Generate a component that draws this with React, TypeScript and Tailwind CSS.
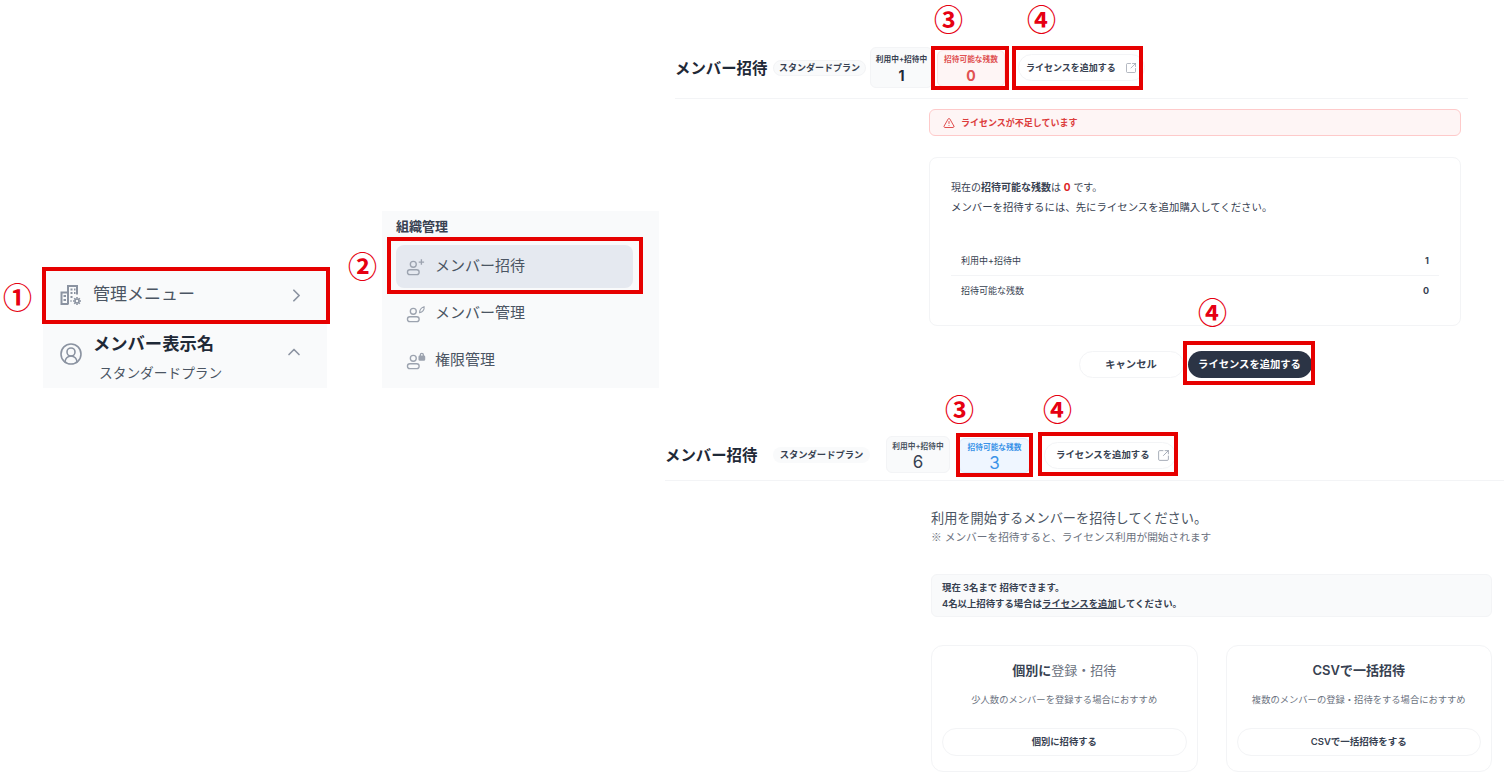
import { ChevronRight, ChevronUp, CircleUserRound, SquareArrowOutUpRight, TriangleAlert } from 'lucide-react'
import clsx from 'clsx'

function BuildingGear() {
  return (
    <svg width="22" height="22" viewBox="0 0 22 22" fill="none" stroke="#8b93a1" strokeWidth="2">
      <path d="M8 20.5V2h9v8.5" />
      <path d="M8 20H1.5V8.5H8" />
      <path d="M10.5 5.5h2M14 5.5h1.5M10.5 9h2M14 9h1.5M3.5 12h2.5M3.5 16h2.5M10.5 13h2M10.5 17h1" strokeWidth="2" />
      <circle cx="17" cy="17" r="2" strokeWidth="1.6" />
      <path d="M17 13v1.6M17 19.4V21M13 17h1.6M19.4 17H21M14.2 14.2l1.1 1.1M18.7 18.7l1.1 1.1M14.2 19.8l1.1-1.1M18.7 15.3l1.1-1.1" strokeWidth="1.6" />
    </svg>
  )
}

function PersonIcon({ kind }: { kind: 'plus' | 'pen' | 'lock' }) {
  return (
    <svg width="20" height="18" viewBox="0 0 22 20" fill="none" stroke="#9ca3af" strokeWidth="1.5">
      <circle cx="8" cy="7" r="3.3" />
      <rect x="1.5" y="13" width="13" height="5.4" rx="2.7" />
      {kind === 'plus' && <path d="M17 1.5v6M14 4.5h6" />}
      {kind === 'pen' && <path d="M15 8.5c0-3 2-5.5 5-6.5 .6 3-1.6 6-5 6.5z" strokeWidth="1.2" />}
      {kind === 'lock' && (
        <>
          <rect x="14.5" y="4.5" width="6" height="4.5" rx="0.8" fill="#9ca3af" />
          <path d="M15.8 4.5V3.2a1.7 1.7 0 0 1 3.4 0v1.3" />
        </>
      )}
    </svg>
  )
}

function Mark({ n, className }: { n: string; className: string }) {
  return <span className={clsx("absolute font-['Noto_Sans_CJK_JP',sans-serif] text-[29px] leading-[34px] font-bold text-[#e60012]", className)}>{n}</span>
}

function RedBox({ className }: { className: string }) {
  return <div className={clsx('absolute border-4 border-[#e60000]', className)} />
}

function Stat({ label, value, className, labelClass, valueClass }: { label: string; value: string; className: string; labelClass: string; valueClass: string }) {
  return (
    <div className={clsx('flex flex-col items-center justify-center rounded-md border', className)}>
      <span className={clsx('text-[7.7px] leading-[12px] font-semibold', labelClass)}>{label}</span>
      <span className={clsx('leading-[19px]', valueClass)}>{value}</span>
    </div>
  )
}

export default function App() {
  return (
    <div className="relative h-[783px] w-[1504px] overflow-hidden bg-white font-['Inter','Noto_Sans_CJK_JP',sans-serif] text-[#374151]">
      {/* 1: sidebar footer */}
      <div className="absolute left-[43px] top-[270px] flex w-[284px] flex-col bg-[#f9fafb]">
        <div className="flex h-[50px] items-center pl-[17px] pr-[20px]">
          <BuildingGear />
          <span className="ml-[11px] text-[17px] text-[#4b5563]">管理メニュー</span>
          <ChevronRight size={21} className="ml-auto text-[#8b93a1]" />
        </div>
        <div className="mt-[4px] flex h-[64px] items-start pl-[16px] pr-[23px]">
          <CircleUserRound size={24} strokeWidth={1.6} className="mt-[18px] text-[#8b93a1]" />
          <div className="ml-[10px] flex flex-col">
            <span className="text-[17.3px] leading-[22px] mt-[9px] font-bold text-[#1f2937]">メンバー表示名</span>
            <span className="ml-[6px] mt-[8px] text-[13.7px] leading-[20px] text-[#4b5563]">スタンダードプラン</span>
          </div>
          <ChevronUp size={20} className="ml-auto mt-[18px] text-[#8b93a1]" />
        </div>
      </div>
      <RedBox className="left-[42px] top-[267px] h-[57px] w-[288px]" />
      <Mark n="①" className="left-[3px] top-[279px]" />

      {/* 2: org menu */}
      <div className="absolute left-[382px] top-[211px] flex h-[177px] w-[277px] flex-col bg-[#f9fafb] pl-[14px] pr-[26px]">
        <span className="mt-[6px] text-[13px] leading-[18px] font-semibold text-[#374151]">組織管理</span>
        <div className="mt-[10px] flex h-[43px] items-center rounded-lg bg-[#e5e9f0] pl-[10px]">
          <PersonIcon kind="plus" />
          <span className="ml-[9px] text-[15px] text-[#4b5563]">メンバー招待</span>
        </div>
        <div className="mt-[4px] flex h-[43px] items-center pl-[10px]">
          <PersonIcon kind="pen" />
          <span className="ml-[9px] text-[15px] text-[#4b5563]">メンバー管理</span>
        </div>
        <div className="mt-[4px] flex h-[43px] items-center pl-[10px]">
          <PersonIcon kind="lock" />
          <span className="ml-[9px] text-[15px] text-[#4b5563]">権限管理</span>
        </div>
      </div>
      <RedBox className="left-[387px] top-[237px] h-[57px] w-[256px]" />
      <Mark n="②" className="left-[348px] top-[248px]" />

      {/* 3: no licences left */}
      <div className="absolute left-[675px] top-[47px] flex h-[52px] w-[793px] items-start border-b border-[#f3f4f6]">
        <span className="mt-[11px] w-[93px] text-[15.4px] leading-[22px] font-bold whitespace-nowrap text-[#1f2937]">メンバー招待</span>
        <span className="ml-[5px] mt-[13px] flex h-[16px] w-[93px] items-center justify-center rounded-full border border-[#f3f4f6] bg-[#f9fafb] text-[9px] font-semibold">スタンダードプラン</span>
        <Stat label="利用中+招待中" value="1" className="ml-[4px] h-[41px] w-[63px] border-[#f3f4f6] bg-[#f9fafb] pt-[3px]" labelClass="text-[#374151]" valueClass="text-[14px] font-bold text-[#1f2937]" />
        <Stat label="招待可能な残数" value="0" className="ml-[4px] mt-[3px] h-[37px] w-[68px] border-[#fee2e2] bg-[#fef5f5] pt-[1px]" labelClass="text-[#e05252]" valueClass="text-[14px] font-bold text-[#e05252]" />
        <div className="ml-[13px] mt-[7px] flex h-[27px] w-[127px] items-center rounded-full border border-[#f3f4f6] pl-[7px]">
          <span className="text-[9px] font-semibold">ライセンスを追加する</span>
          <SquareArrowOutUpRight size={12} strokeWidth={1.3} className="ml-[9px] text-[#8b93a1]" />
        </div>
      </div>
      <RedBox className="left-[931px] top-[46px] h-[44px] w-[78px]" />
      <RedBox className="left-[1012px] top-[46px] h-[44px] w-[131px]" />
      <Mark n="③" className="left-[934px] top-[1px]" />
      <Mark n="④" className="left-[1027px] top-[1px]" />

      <div className="absolute left-[929px] top-[109px] flex w-[532px] flex-col">
        <div className="flex h-[27px] items-center rounded-md border border-[#fecaca] bg-[#fef5f5] pl-[13px] text-[#dc3c3c]">
          <TriangleAlert size={12} strokeWidth={1.8} />
          <span className="ml-[6px] text-[9px] font-semibold">ライセンスが不足しています</span>
        </div>
        <div className="mt-[21px] flex h-[169px] flex-col rounded-lg border border-[#f3f4f6] px-[21px] pt-[20px]">
          <p className="text-[10px] leading-[18px]">現在の<b className="font-bold">招待可能な残数</b>は <b className="font-bold text-[#dc2626]">0</b> です。</p>
          <p className="mt-[3px] text-[10.4px] leading-[18px]">メンバーを招待するには、先にライセンスを追加購入してください。</p>
          <div className="mt-[29px] flex h-[30px] items-center justify-between border-b border-[#f3f4f6] px-[10px] text-[9px]">
            <span>利用中+招待中</span>
            <span className="font-bold">1</span>
          </div>
          <div className="flex h-[30px] items-center justify-between px-[10px] text-[9px]">
            <span>招待可能な残数</span>
            <span className="font-bold">0</span>
          </div>
        </div>
        <div className="mt-[25px] flex justify-center gap-[4px]">
          <div className="flex h-[27px] w-[105px] items-center justify-center rounded-full border border-[#f3f4f6] text-[10.3px] font-bold">キャンセル</div>
          <div className="flex h-[27px] w-[124px] items-center justify-center rounded-full bg-[#2b3445] text-[10.3px] font-bold text-white">ライセンスを追加する</div>
        </div>
      </div>
      <RedBox className="left-[1183px] top-[341px] h-[44px] w-[132px]" />
      <Mark n="④" className="left-[1198px] top-[294px]" />

      {/* 4: licences left */}
      <div className="absolute left-[665px] top-[436px] flex h-[45px] w-[839px] items-start border-b border-[#f3f4f6]">
        <span className="mt-[8px] w-[93px] text-[15.4px] leading-[24px] font-bold whitespace-nowrap text-[#1f2937]">メンバー招待</span>
        <span className="ml-[15px] mt-[11px] flex h-[16px] w-[97px] items-center justify-center rounded-full bg-[#f9fafb] text-[9.3px] font-semibold">スタンダードプラン</span>
        <Stat label="利用中+招待中" value="6" className="ml-[16px] h-[37px] w-[64px] border-[#f3f4f6] bg-[#f9fafb] pt-[3px]" labelClass="text-[#4b5563]" valueClass="text-[17px] text-[#374151]" />
        <Stat label="招待可能な残数" value="3" className="ml-[9px] mt-[2px] h-[35px] w-[71px] border-[#dbeafe] bg-[#eff6ff] pt-[3px]" labelClass="text-[#3b93e8]" valueClass="text-[17px] text-[#3b93e8]" />
        <div className="ml-[14px] flex h-[27px] w-[132px] mt-[6px] items-center rounded-full border border-[#f3f4f6] pl-[11px]">
          <span className="text-[9.4px] font-semibold">ライセンスを追加する</span>
          <SquareArrowOutUpRight size={13} strokeWidth={1.4} className="ml-[7px] text-[#8b93a1]" />
        </div>
      </div>
      <RedBox className="left-[956px] top-[433px] h-[44px] w-[77px]" />
      <RedBox className="left-[1038px] top-[432px] h-[44px] w-[140px]" />
      <Mark n="③" className="left-[945px] top-[391px]" />
      <Mark n="④" className="left-[1043px] top-[391px]" />

      <div className="absolute left-[931px] top-[508px] flex w-[561px] flex-col">
        <p className="text-[13.2px] leading-[20px] text-[#4b5563]">利用を開始するメンバーを招待してください。</p>
        <p className="text-[10.7px] leading-[18px] text-[#6b7280]"><span className="font-['Noto_Sans_CJK_JP',sans-serif]">※</span> メンバーを招待すると、ライセンス利用が開始されます</p>
        <div className="mt-[27px] flex h-[43px] flex-col justify-center rounded-md border border-[#f3f4f6] bg-[#f9fafb] pl-[10px] text-[9.4px] leading-[16px] font-semibold">
          <p>現在 3名まで 招待できます。</p>
          <p>4名以上招待する場合は<span className="underline">ライセンスを追加</span>してください。</p>
        </div>
        <div className="mt-[28px] grid grid-cols-2 gap-[28px]">
          <div className="flex h-[127px] flex-col items-center rounded-xl border border-[#f3f4f6] px-[10px] pt-[14px]">
            <p className="text-[13px] leading-[20px] font-semibold">個別に<span className="font-normal text-[#6b7280]">登録・招待</span></p>
            <p className="mt-[13px] text-[9.3px] leading-[14px] text-[#6b7280]">少人数のメンバーを登録する場合におすすめ</p>
            <div className="mt-[21px] flex h-[28px] w-full items-center justify-center rounded-full border border-[#f3f4f6] text-[9.3px] font-semibold">個別に招待する</div>
          </div>
          <div className="flex h-[127px] flex-col items-center rounded-xl border border-[#f3f4f6] px-[10px] pt-[14px]">
            <p className="text-[13px] leading-[20px] font-semibold">CSVで一括招待</p>
            <p className="mt-[13px] text-[9.3px] leading-[14px] text-[#6b7280]">複数のメンバーの登録・招待をする場合におすすめ</p>
            <div className="mt-[21px] flex h-[28px] w-full items-center justify-center rounded-full border border-[#f3f4f6] text-[9.5px] font-semibold">CSVで一括招待をする</div>
          </div>
        </div>
      </div>
    </div>
  )
}
